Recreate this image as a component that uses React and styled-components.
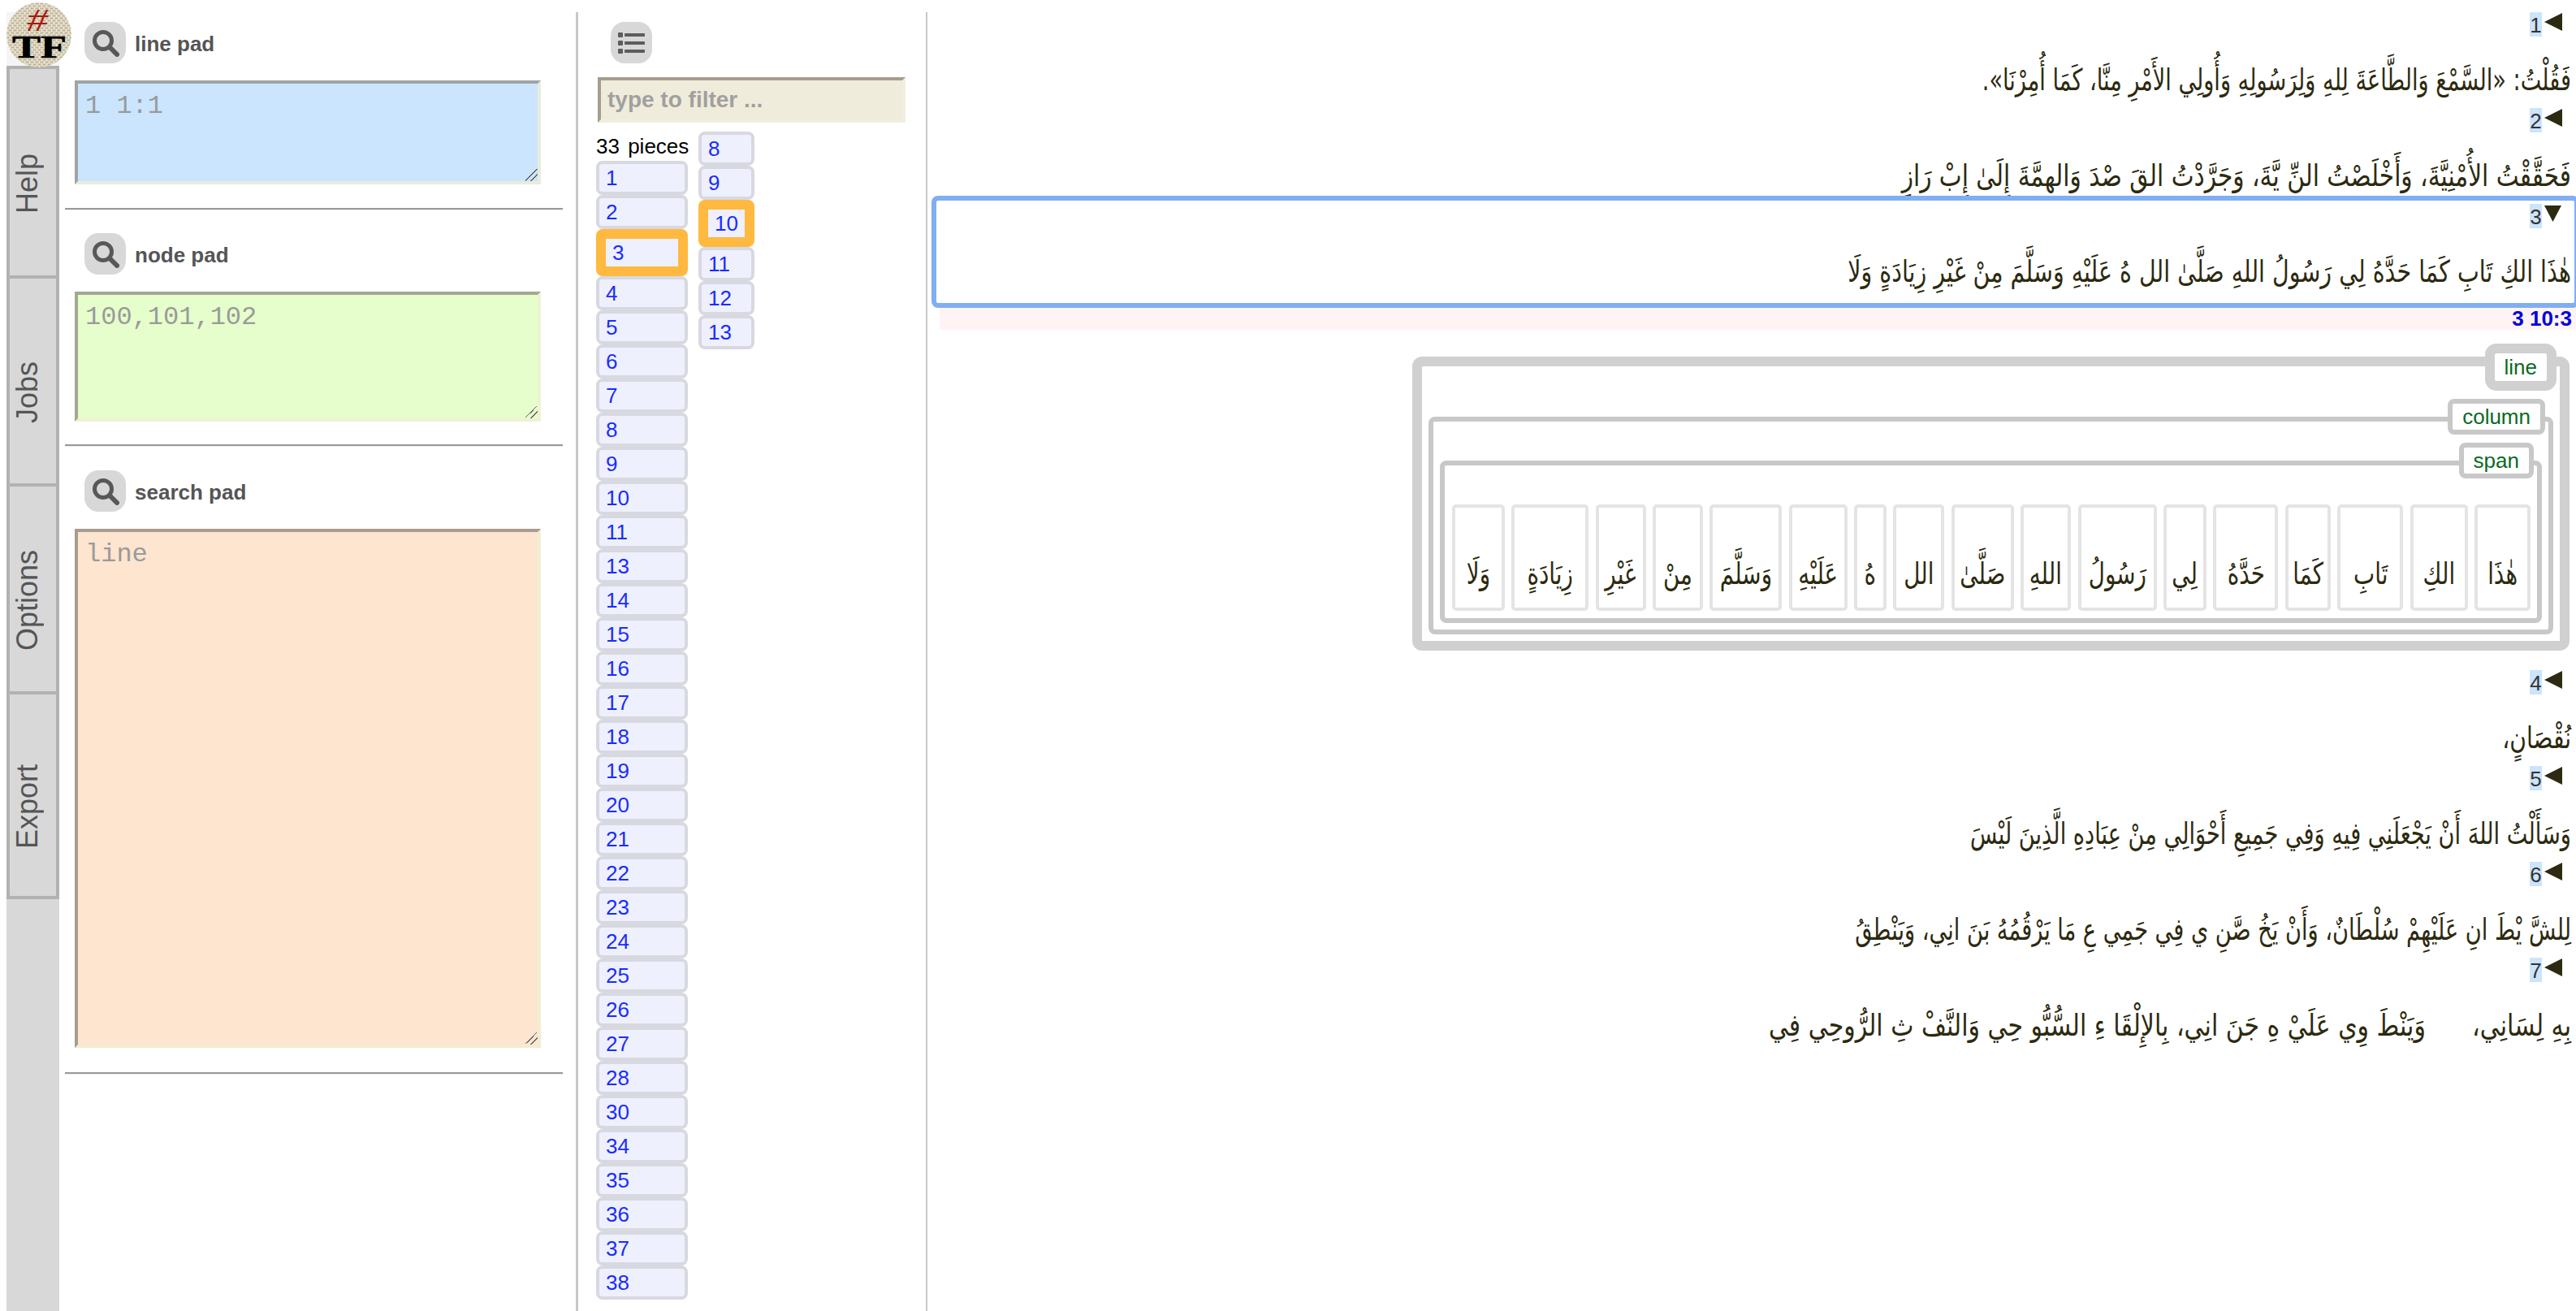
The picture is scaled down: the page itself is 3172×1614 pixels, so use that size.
import React from 'react';
import styled, { createGlobalStyle } from 'styled-components';

const Global = createGlobalStyle`
  html, body { margin: 0; padding: 0; background: #fff; }
  body { font-family: "Liberation Sans", Arial, sans-serif; }
  #root { width: 3172px; height: 1614px; overflow: hidden; }
`;

const Page = styled.div`
  display: flex;
  width: 3172px;
  height: 1614px;
  overflow: hidden;
  position: relative;
`;

const Strip = styled.nav`
  position: relative;
  flex: none;
  width: 65px;
  margin-left: 8px;
  padding-top: 81px;
  display: flex;
  flex-direction: column;
  background: linear-gradient(#fff 0 15px, #f5f5f5 15px 81px, #d8d8d8 81px);
`;

const LogoWrap = styled.svg`
  position: absolute;
  z-index: 2;
  left: 0;
  top: 3px;
  width: 80px;
  height: 80px;
`;

const Tab = styled.div`
  box-sizing: border-box;
  height: ${p => p.$h}px;
  border: 4px solid #b2b2b2;
  border-bottom-width: ${p => (p.$last ? 4 : 0)}px;
  padding-right: 14px;
  background: #d8d8d8;
  color: #555;
  font-size: 36px;
  display: flex;
  align-items: center;
  justify-content: center;
  writing-mode: vertical-rl;
  span { display: block; transform: rotate(180deg); margin-top: 28px; }
`;

const PadPanel = styled.section`
  flex: none;
  box-sizing: border-box;
  width: 639px;
  margin-top: 15px;
  padding: 12px 0 0 7px;
  border-right: 3px solid #c8c8c8;
`;

const PadHead = styled.div`
  display: flex;
  align-items: center;
  gap: 11px;
  padding-left: 24px;
  height: 51px;
`;

const IconButton = styled.button`
  flex: none;
  width: 51px;
  height: 51px;
  padding: 0;
  border: 0;
  border-radius: 17px;
  background: #d8d8d8;
  display: flex;
  align-items: center;
  justify-content: center;
`;

const PadTitle = styled.span`
  padding-top: 3px;
  font-size: 26px;
  font-weight: 700;
  color: #555;
`;

const Pad = styled.textarea`
  display: block;
  box-sizing: border-box;
  width: 574px;
  height: ${p => p.$h}px;
  margin: 21px 0 0 12px;
  padding: 9px 9px;
  border-style: solid;
  border-width: 4px;
  border-color: ${p => p.$dark} ${p => p.$light} ${p => p.$light} ${p => p.$dark};
  background: ${p => p.$bg};
  font-family: "Liberation Mono", monospace;
  font-size: 32px;
  resize: both;
  outline: none;
  &::placeholder { color: #9a9a9a; opacity: 1; }
  &::-webkit-resizer {
    background: linear-gradient(135deg, transparent 44%, #666 44% 50%, transparent 50% 68%, #666 68% 74%, transparent 74%);
  }
`;

const Rule = styled.hr`
  box-sizing: border-box;
  width: 613px;
  height: 3px;
  margin: ${p => p.$mt}px 0 ${p => p.$mb}px 0;
  border: 0;
  border-top: 2px solid #999;
  border-bottom: 1px solid #eee;
`;

const ListPanel = styled.section`
  flex: none;
  box-sizing: border-box;
  width: 430px;
  margin-top: 15px;
  padding: 12px 0 0 22px;
  border-right: 2px solid #c8c8c8;
`;

const ListHead = styled.div`
  padding-left: 18px;
`;

const Filter = styled.input`
  display: block;
  box-sizing: border-box;
  width: 379px;
  height: 56px;
  margin: 17px 0 11px 2px;
  padding: 0 8px;
  border-style: solid;
  border-width: 4px;
  border-color: #a49e8e #f2eedf #f2eedf #a49e8e;
  background: #f0ecdb;
  font-family: "Liberation Sans", sans-serif;
  font-size: 28px;
  font-weight: 700;
  outline: none;
  &::placeholder { color: #a0a0a0; opacity: 1; }
`;

const Columns = styled.div`
  display: flex;
  align-items: flex-start;
  gap: 13px;
`;

const PieceCol = styled.div`
  display: flex;
  flex-direction: column;
  width: ${p => p.$w}px;
`;

const Count = styled.div`
  height: 36px;
  font-size: 26px;
  word-spacing: 3px;
  line-height: 37px;
  color: #000;
  white-space: nowrap;
`;

const Piece = styled.a`
  display: block;
  box-sizing: border-box;
  border: ${p => (p.$on ? 12 : 4)}px solid ${p => (p.$on ? '#ffb940' : '#d8d8e0')};
  border-radius: 8px;
  padding: 0 8px;
  height: ${p => (p.$on ? 58 : 42)}px;
  background: #eef0fe;
  background-clip: padding-box;
  color: #1a2cff;
  font-size: 26px;
  line-height: 34px;
`;

const Main = styled.main`
  flex: 1;
  min-width: 0;
  display: flex;
  flex-direction: column;
  padding: 15px 6px 0 5px;
`;

const Verse = styled.article`
  position: relative;
  height: 118px;
`;

const MarkRow = styled.div`
  display: flex;
  justify-content: flex-end;
  align-items: flex-start;
  gap: 3px;
  height: 30px;
  padding-right: 11px;
`;

const Num = styled.span`
  width: 15px;
  height: 30px;
  background: #cce4fb;
  color: #333;
  font-size: 26px;
  line-height: 32px;
  text-align: center;
`;

const Caret = styled.svg`
  width: 22px;
  height: 22px;
  margin-top: 1px;
  fill: #2c2a10;
`;

const Ar = styled.div`
  direction: rtl;
  text-align: right;
  white-space: pre;
  height: 88px;
  font-family: "DejaVu Sans", "Noto Sans", serif;
  font-size: 37px;
  line-height: 108px;
  color: #2c2a10;
  transform: scaleX(${p => p.$sx});
  transform-origin: right center;
`;

const Focus = styled.div`
  position: relative;
  box-sizing: border-box;
  margin: -10px -10px 0 0;
  border: 6px solid #80aef2;
  border-radius: 8px;
  padding: 4px;
  height: 138px;
`;

const Ref = styled.div`
  height: 27px;
  margin: 0 -6px 0 10px;
  padding-right: 5px;
  background: #fff4f3;
  color: #0000e0;
  font-size: 26px;
  font-weight: 700;
  line-height: 27px;
  text-align: right;
`;

const Tree = styled.div`
  align-self: flex-end;
  margin: 33px 2px 24px 0;
`;

const Node = styled.div`
  position: relative;
  border: ${p => p.$b}px solid ${p => p.$c};
  border-radius: ${p => p.$r}px;
  padding: ${p => p.$pad};
`;

const Tag = styled.span`
  position: absolute;
  top: ${p => p.$t}px;
  right: 4px;
  box-sizing: border-box;
  border: ${p => p.$b}px solid ${p => p.$c};
  border-radius: ${p => p.$b + 2}px;
  padding: 0 12px;
  height: ${p => p.$h}px;
  background: #fff;
  color: #0b6a1f;
  font-size: 26px;
  line-height: ${p => p.$h - 2 * p.$b}px;
`;

const Words = styled.div`
  display: flex;
  direction: rtl;
  gap: 8.4px;
`;

const Word = styled.div`
  box-sizing: border-box;
  width: ${p => p.$w}px;
  height: 131px;
  border: 4px solid #e4e4e4;
  border-radius: 5px;
  display: flex;
  justify-content: center;
  white-space: nowrap;
  font-family: "DejaVu Sans", "Noto Sans", serif;
  font-size: 37px;
  line-height: 164px;
  color: #2c2a10;
  span { display: block; height: 123px; transform: scaleX(.75); }
`;

const SearchIcon = () => (
  <svg width="34" height="34" viewBox="0 0 34 34" fill="none" stroke="#585858">
    <circle cx="14" cy="14" r="10.5" strokeWidth="5" />
    <line x1="22" y1="22" x2="31" y2="31" strokeWidth="6" strokeLinecap="round" />
  </svg>
);

const ListIcon = () => (
  <svg width="33" height="26" viewBox="0 0 33 26" fill="#5c5c5c">
    <rect x="0" y="0" width="6" height="6" rx="1" />
    <rect x="8" y="1" width="25" height="4" rx="1" />
    <rect x="0" y="10" width="6" height="6" rx="1" />
    <rect x="8" y="11" width="25" height="4" rx="1" />
    <rect x="0" y="20" width="6" height="6" rx="1" />
    <rect x="8" y="21" width="25" height="4" rx="1" />
  </svg>
);

const Logo = () => (
  <LogoWrap viewBox="0 0 80 80">
    <defs>
      <pattern id="weave" width="6" height="6" patternUnits="userSpaceOnUse">
        <rect width="6" height="6" fill="#d8d0ba" />
        <path d="M0 1.5h3M3 4.5h3" stroke="#b9ae94" strokeWidth="1" />
        <path d="M4.5 0v3M1.5 3v3" stroke="#eee8d8" strokeWidth="1" />
      </pattern>
    </defs>
    <circle cx="40" cy="40" r="40" fill="url(#weave)" />
    <text x="25" y="35" fontFamily="Liberation Serif" fontStyle="italic" fontSize="40" fill="#a81a10" textLength="26" lengthAdjust="spacingAndGlyphs">#</text>
    <text x="7" y="68" fontFamily="Liberation Serif" fontWeight="700" fontSize="40" fill="#000" stroke="#000" strokeWidth="0.6" textLength="67" lengthAdjust="spacingAndGlyphs">TF</text>
  </LogoWrap>
);

const Mark = ({ n, open }) => (
  <MarkRow>
    <Num>{n}</Num>
    <Caret viewBox="0 0 22 22">
      <polygon points={open ? '0,1 21,1 10.5,21' : '22,0 22,22 0,11'} />
    </Caret>
  </MarkRow>
);

const col1 = [1,2,3,4,5,6,7,8,9,10,11,13,14,15,16,17,18,19,20,21,22,23,24,25,26,27,28,30,34,35,36,37,38];
const col2 = [8,9,10,11,12,13];

const words = [
  ['هٰذَا', 69], ['الكِ', 71], ['تَابِ', 81], ['كَمَا', 56], ['حَدَّهُ', 80], ['لِي', 53], ['رَسُولُ', 97], ['اللهِ', 62],
  ['صَلَّىٰ', 77], ['الل', 63], ['هُ', 40], ['عَلَيْهِ', 72], ['وَسَلَّمَ', 89], ['مِنْ', 62], ['غَيْرِ', 62], ['زِيَادَةٍ', 95], ['وَلَا', 65],
];

export default function App() {
  return (
    <Page>
      <Global />
      <Strip>
        <Logo />
        <Tab $h={258}><span>Help</span></Tab>
        <Tab $h={256}><span>Jobs</span></Tab>
        <Tab $h={256}><span>Options</span></Tab>
        <Tab $h={256} $last><span>Export</span></Tab>
      </Strip>

      <PadPanel>
        <PadHead><IconButton><SearchIcon /></IconButton><PadTitle>line pad</PadTitle></PadHead>
        <Pad $h={128} $bg="#cbe5fe" $dark="#a0a4a4" $light="#e8ecdc" placeholder="1 1:1" />
        <Rule $mt={29} $mb={28} />
        <PadHead><IconButton><SearchIcon /></IconButton><PadTitle>node pad</PadTitle></PadHead>
        <Pad $h={160} $bg="#e5fecb" $dark="#a4a894" $light="#eef2d4" placeholder="100,101,102" />
        <Rule $mt={28} $mb={29} />
        <PadHead><IconButton><SearchIcon /></IconButton><PadTitle>search pad</PadTitle></PadHead>
        <Pad $h={639} $bg="#fde5cf" $dark="#a89c90" $light="#f2ecd4" placeholder="line" />
        <Rule $mt={30} $mb={0} />
      </PadPanel>

      <ListPanel>
        <ListHead><IconButton><ListIcon /></IconButton></ListHead>
        <Filter placeholder="type to filter ..." />
        <Columns>
          <PieceCol $w={113}>
            <Count>33 pieces</Count>
            {col1.map(n => <Piece key={n} $on={n === 3}>{n}</Piece>)}
          </PieceCol>
          <PieceCol $w={69}>
            {col2.map(n => <Piece key={n} $on={n === 10}>{n}</Piece>)}
          </PieceCol>
        </Columns>
      </ListPanel>

      <Main>
        <Verse>
          <Mark n={1} />
          <Ar $sx={0.733}>فَقُلْتُ: «السَّمْعَ وَالطَّاعَةَ لِلهِ وَلِرَسُولِهِ وَأُولِي الأَمْرِ مِنَّا، كَمَا أُمِرْنَا».</Ar>
        </Verse>
        <Verse>
          <Mark n={2} />
          <Ar $sx={0.8}>فَحَقَّقْتُ الأُمْنِيَّةَ، وَأَخْلَصْتُ النِّ يَّةَ، وَجَرَّدْتُ القَ صْدَ وَالهِمَّةَ إِلَىٰ إِبْ رَازِ</Ar>
        </Verse>
        <Focus>
          <Mark n={3} open />
          <Ar $sx={0.77}>هٰذَا الكِ تَابِ كَمَا حَدَّهُ لِي رَسُولُ اللهِ صَلَّىٰ الل هُ عَلَيْهِ وَسَلَّمَ مِنْ غَيْرِ زِيَادَةٍ وَلَا</Ar>
        </Focus>
        <Ref>3 10:3</Ref>
        <Tree>
          <Node $b={12} $c="#d0d0d0" $r={12} $pad="62px 8px 8px">
            <Tag $t={-28} $b={12} $c="#d0d0d0" $h={58}>line</Tag>
            <Node $b={6} $c="#c8c8c8" $r={8} $pad="48px 8px 8px">
              <Tag $t={-28} $b={6} $c="#c8c8c8" $h={44}>column</Tag>
              <Node $b={6} $c="#c8c8c8" $r={8} $pad="48px 8px 9px 9px">
                <Tag $t={-28} $b={6} $c="#c8c8c8" $h={44}>span</Tag>
                <Words>
                  {words.map(([t, w], i) => <Word key={i} $w={w}><span>{t}</span></Word>)}
                </Words>
              </Node>
            </Node>
          </Node>
        </Tree>
        <Verse>
          <Mark n={4} />
          <Ar $sx={0.76}>نُقْصَانٍ،</Ar>
        </Verse>
        <Verse>
          <Mark n={5} />
          <Ar $sx={0.735}>وَسَأَلْتُ اللهَ أَنْ يَجْعَلَنِي فِيهِ وَفِي جَمِيعِ أَحْوَالِي مِنْ عِبَادِهِ الَّذِينَ لَيْسَ</Ar>
        </Verse>
        <Verse>
          <Mark n={6} />
          <Ar $sx={0.735}>لِلشَّ يْطَ انِ عَلَيْهِمْ سُلْطَانٌ، وَأَنْ يَخُ صَّنِ ي فِي جَمِي عِ مَا يَرْقُمُهُ بَنَ انِي، وَيَنْطِقُ</Ar>
        </Verse>
        <Verse>
          <Mark n={7} />
          <Ar $sx={0.81}>بِهِ لِسَانِي،      وَيَنْطَ وِي عَلَيْ هِ جَنَ انِي، بِالإِلْقَا ءِ السُّبُّو حِي وَالنَّفْ ثِ الرُّوحِي فِي</Ar>
        </Verse>
      </Main>
    </Page>
  );
}
